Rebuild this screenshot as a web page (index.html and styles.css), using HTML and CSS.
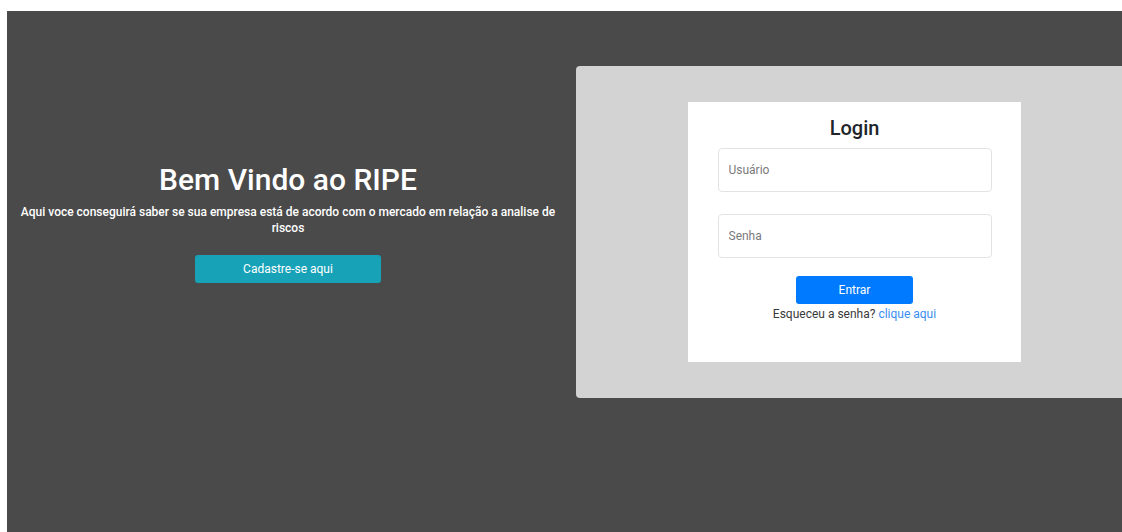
FILE: index.html
```html
<!DOCTYPE html>
<html lang="pt-BR">
<head>
<meta charset="utf-8">
<title>RIPE - Login</title>
<link rel="stylesheet" href="styles.css">
</head>
<body>
  <main class="page">
    <section class="welcome">
      <h1 class="welcome-title">Bem Vindo ao RIPE</h1>
      <p class="welcome-text">Aqui voce conseguirá saber se sua empresa está de acordo com o mercado em relação a analise de riscos</p>
      <a class="btn btn-info" href="#">Cadastre-se aqui</a>
    </section>
    <section class="login-panel">
      <form class="login-box">
        <h2 class="login-title">Login</h2>
        <input class="field" type="text" placeholder="Usuário">
        <input class="field" type="password" placeholder="Senha">
        <button class="btn btn-primary" type="button">Entrar</button>
        <p class="forgot">Esqueceu a senha? <a href="#">clique aqui</a></p>
      </form>
    </section>
  </main>
</body>
</html>
```
FILE: styles.css
```css
html, body {
  margin: 0;
  padding: 0;
  overflow: hidden;
  background: #ffffff;
}

body {
  font-family: Roboto, "Liberation Sans", sans-serif;
  padding: 11px 0 0 7px;
}

.page {
  display: flex;
  align-items: flex-start;
  gap: 7px;
  width: 1130px;
  height: 540px;
  background: #4a4a4a;
}

.welcome {
  width: 562px;
  flex: none;
  margin-top: 152px;
  display: flex;
  flex-direction: column;
  align-items: center;
  text-align: center;
  color: #ffffff;
}

.welcome-title {
  margin: 0;
  font-size: 30px;
  font-weight: 500;
  line-height: 34px;
}

.welcome-text {
  margin: 7px 0 0;
  font-size: 12px;
  font-weight: 500;
  line-height: 16px;
  padding: 0 10px;
}

.btn {
  display: inline-flex;
  align-items: center;
  justify-content: center;
  border: none;
  border-radius: 3px;
  color: #ffffff;
  font-family: inherit;
  font-size: 12px;
  font-weight: 400;
  text-decoration: none;
  height: 28px;
}

.btn-info {
  margin-top: 19px;
  width: 186px;
  background: #17a2b8;
}

.btn-primary {
  width: 117px;
  background: #007bff;
  margin-top: 18px;
  padding: 0;
}

.login-panel {
  flex: none;
  width: 560px;
  height: 332px;
  margin-top: 55px;
  background: #d3d3d3;
  border-radius: 4px 0 0 4px;
  padding: 36px 0 0 112px;
  box-sizing: border-box;
}

.login-box {
  width: 333px;
  height: 260px;
  background: #ffffff;
  box-sizing: border-box;
  padding-top: 14px;
  display: flex;
  flex-direction: column;
  align-items: center;
}

.login-title {
  margin: 0 0 8px;
  font-size: 20px;
  font-weight: 500;
  line-height: 24px;
  color: #212529;
}

.field {
  width: 274px;
  height: 44px;
  box-sizing: border-box;
  border: 1px solid #e3e3e3;
  border-radius: 4px;
  padding: 0 10px;
  font-family: inherit;
  font-size: 12px;
  color: #495057;
  background: #ffffff;
}

.field + .field {
  margin-top: 22px;
}

.field::placeholder {
  color: #7a7a7a;
}

.forgot {
  margin: 2px 0 0;
  font-size: 12px;
  line-height: 16px;
  color: #3a3a3a;
}

.forgot a {
  color: #3a8ef0;
  text-decoration: none;
}
```
